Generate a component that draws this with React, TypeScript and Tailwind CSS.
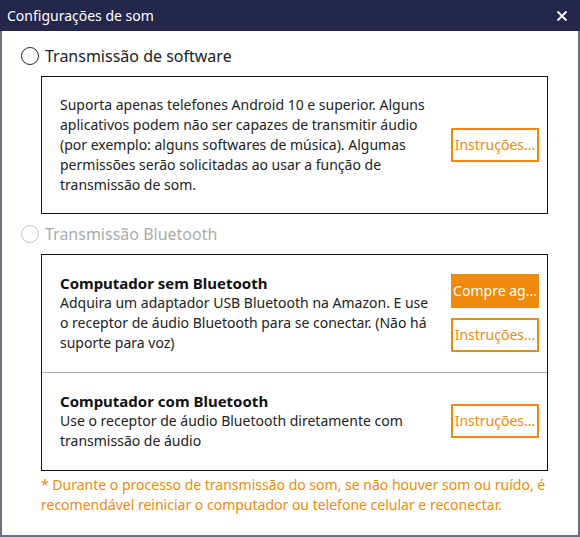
import React from "react"

const font = { fontFamily: '"Noto Sans", "Open Sans", sans-serif' }

function Radio({ label, disabled }: { label: string; disabled?: boolean }) {
  return (
    <div className="flex items-center h-6 pl-[19px] gap-[6px]">
      <span
        className={`w-[18px] h-[18px] rounded-full border-[1.5px] bg-white ${
          disabled ? "border-[#c4c4c4]" : "border-[#2a2a2a]"
        }`}
      />
      <span className={`text-[16px] leading-6 ${disabled ? "text-[#ababab]" : "text-[#222]"}`}>{label}</span>
    </div>
  )
}

function OutlineButton({ children }: { children: React.ReactNode }) {
  return (
    <button className="w-[88px] h-[34px] border-2 border-[#f08a0c] bg-white text-[#f08a0c] text-[14px] leading-none whitespace-nowrap overflow-hidden">
      {children}
    </button>
  )
}

export default function App() {
  return (
    <div className="w-[580px] h-[537px] flex flex-col bg-white" style={font}>
      {/* Title Bar */}
      <div className="h-[31px] bg-[#25264b] flex items-center justify-between pl-[7px] pr-[12px] shrink-0">
        <span className="text-white text-[14px]">Configurações de som</span>
        <svg width="12" height="12" viewBox="0 0 12 12" className="text-white">
          <path d="M1.5 1.5 L10.5 10.5 M10.5 1.5 L1.5 10.5" stroke="currentColor" strokeWidth="1.8" />
        </svg>
      </div>

      <div className="flex-1 flex flex-col border-x-2 border-b-2 border-[#6e6f80] pt-[13px]">
        <Radio label="Transmissão de software" />

        {/* Software box */}
        <div className="ml-[39px] mr-[30px] mt-2 border border-[#111] flex items-center pl-[18px] pr-[8px] py-[18px]">
          <div className="flex-1 min-w-0 text-[14px] leading-[20px] text-[#222] whitespace-nowrap">
            <div>Suporta apenas telefones Android 10 e superior. Alguns</div>
            <div>aplicativos podem não ser capazes de transmitir áudio</div>
            <div>(por exemplo: alguns softwares de música). Algumas</div>
            <div>permissões serão solicitadas ao usar a função de</div>
            <div>transmissão de som.</div>
          </div>
          <OutlineButton>Instruções...</OutlineButton>
        </div>

        <div className="mt-2">
          <Radio label="Transmissão Bluetooth" disabled />
        </div>

        {/* Bluetooth box */}
        <div className="ml-[39px] mr-[30px] mt-2 border border-[#111] flex flex-col">
          <div className="flex items-center pl-[18px] pr-[8px] pt-[18px] pb-[19px] border-b border-[#a8a8a8]">
            <div className="flex-1 min-w-0 text-[14px] leading-[20px] text-[#222] whitespace-nowrap">
              <div className="font-bold text-[15px] text-[#111]">Computador sem Bluetooth</div>
              <div>Adquira um adaptador USB Bluetooth na Amazon. E use</div>
              <div>o receptor de áudio Bluetooth para se conectar. (Não há</div>
              <div>suporte para voz)</div>
            </div>
            <div className="flex flex-col gap-[10px]">
              <button className="w-[88px] h-[34px] bg-[#f08a0c] text-white text-[14px] leading-none whitespace-nowrap">
                Compre ag...
              </button>
              <OutlineButton>Instruções...</OutlineButton>
            </div>
          </div>
          <div className="flex items-center pl-[18px] pr-[8px] pt-[18px] pb-[19px]">
            <div className="flex-1 min-w-0 text-[14px] leading-[20px] text-[#222] whitespace-nowrap">
              <div className="font-bold text-[15px] text-[#111]">Computador com Bluetooth</div>
              <div>Use o receptor de áudio Bluetooth diretamente com</div>
              <div>transmissão de áudio</div>
            </div>
            <OutlineButton>Instruções...</OutlineButton>
          </div>
        </div>

        {/* Footnote */}
        <div className="ml-[39px] mr-[20px] mt-[4px] text-[14px] leading-[20px] text-[#f08a0c]">
          <div>* Durante o processo de transmissão do som, se não houver som ou ruído, é</div>
          <div>recomendável reiniciar o computador ou telefone celular e reconectar.</div>
        </div>
      </div>
    </div>
  )
}
